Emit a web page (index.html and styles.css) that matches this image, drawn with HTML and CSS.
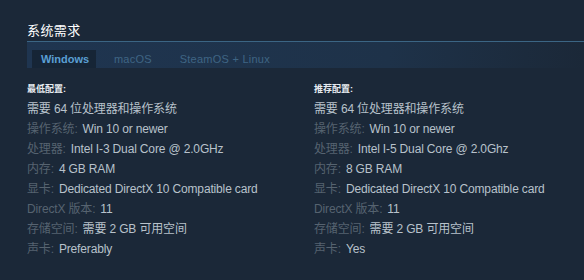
FILE: index.html
```html
<!DOCTYPE html>
<html lang="zh">
<head>
<meta charset="utf-8">
<link rel="stylesheet" href="styles.css">
</head>
<body>
<div class="page">
  <h2 class="title">系统需求</h2>
  <div class="tabs">
    <div class="tab active">Windows</div>
    <div class="tab mac">macOS</div>
    <div class="tab linux">SteamOS + Linux</div>
  </div>
  <div class="cols">
    <div class="col">
      <div class="head">最低配置:</div>
      <div class="row"><span class="val">需要 64 位处理器和操作系统</span></div>
      <div class="row"><span class="lbl">操作系统:</span><span class="val">Win 10 or newer</span></div>
      <div class="row"><span class="lbl">处理器:</span><span class="val">Intel I-3 Dual Core @ 2.0GHz</span></div>
      <div class="row"><span class="lbl">内存:</span><span class="val">4 GB RAM</span></div>
      <div class="row"><span class="lbl">显卡:</span><span class="val">Dedicated DirectX 10 Compatible card</span></div>
      <div class="row"><span class="lbl">DirectX 版本:</span><span class="val">11</span></div>
      <div class="row"><span class="lbl">存储空间:</span><span class="val">需要 2 GB 可用空间</span></div>
      <div class="row"><span class="lbl">声卡:</span><span class="val">Preferably</span></div>
    </div>
    <div class="col">
      <div class="head">推荐配置:</div>
      <div class="row"><span class="val">需要 64 位处理器和操作系统</span></div>
      <div class="row"><span class="lbl">操作系统:</span><span class="val">Win 10 or newer</span></div>
      <div class="row"><span class="lbl">处理器:</span><span class="val">Intel I-5 Dual Core @ 2.0Ghz</span></div>
      <div class="row"><span class="lbl">内存:</span><span class="val">8 GB RAM</span></div>
      <div class="row"><span class="lbl">显卡:</span><span class="val">Dedicated DirectX 10 Compatible card</span></div>
      <div class="row"><span class="lbl">DirectX 版本:</span><span class="val">11</span></div>
      <div class="row"><span class="lbl">存储空间:</span><span class="val">需要 2 GB 可用空间</span></div>
      <div class="row"><span class="lbl">声卡:</span><span class="val">Yes</span></div>
    </div>
  </div>
</div>
</body>
</html>
```

FILE: styles.css
```css
html, body {
  margin: 0;
  padding: 0;
  background: #1b2838;
  width: 584px;
  height: 280px;
  overflow: hidden;
  font-family: "Liberation Sans", Arial, "Noto Sans CJK SC", sans-serif;
}
.page {
  padding: 23px 0 0 27px;
}
.title {
  margin: 0;
  font-size: 13px;
  line-height: 15px;
  font-weight: normal;
  color: #ffffff;
  letter-spacing: 0.4px;
}
.tabs {
  margin-top: 3px;
  height: 27px;
  box-sizing: border-box;
  border-top: 1px solid #3b6584;
  background: linear-gradient(to right, #1f3550 0%, #1e3249 65%, #1b2838 100%);
  display: flex;
  align-items: flex-start;
  padding: 8px 0 0 5px;
}
.tab {
  height: 18px;
  line-height: 18px;
  font-size: 11px;
  padding: 0 9px;
  color: #3f6584;
}
.tab.active {
  background: #162536;
  color: #5a9fd4;
  font-weight: bold;
  width: 46px;
}
.tab.mac { padding: 0 18px; letter-spacing: 0.2px; }
.tab.linux { padding: 0 10px; letter-spacing: 0.25px; }
.cols {
  display: flex;
  margin-top: 15px;
}
.col {
  flex: none;
  width: 287px;
}
.head {
  font-size: 9px;
  line-height: 12px;
  font-weight: bold;
  color: #e8edf1;
  margin-bottom: 4px;
}
.row {
  font-size: 12px;
  line-height: 20px;
  white-space: nowrap;
  letter-spacing: -0.15px;
}
.lbl {
  color: #566370;
  margin-right: 5px;
}
.val {
  color: #b8c2cb;
}
```
